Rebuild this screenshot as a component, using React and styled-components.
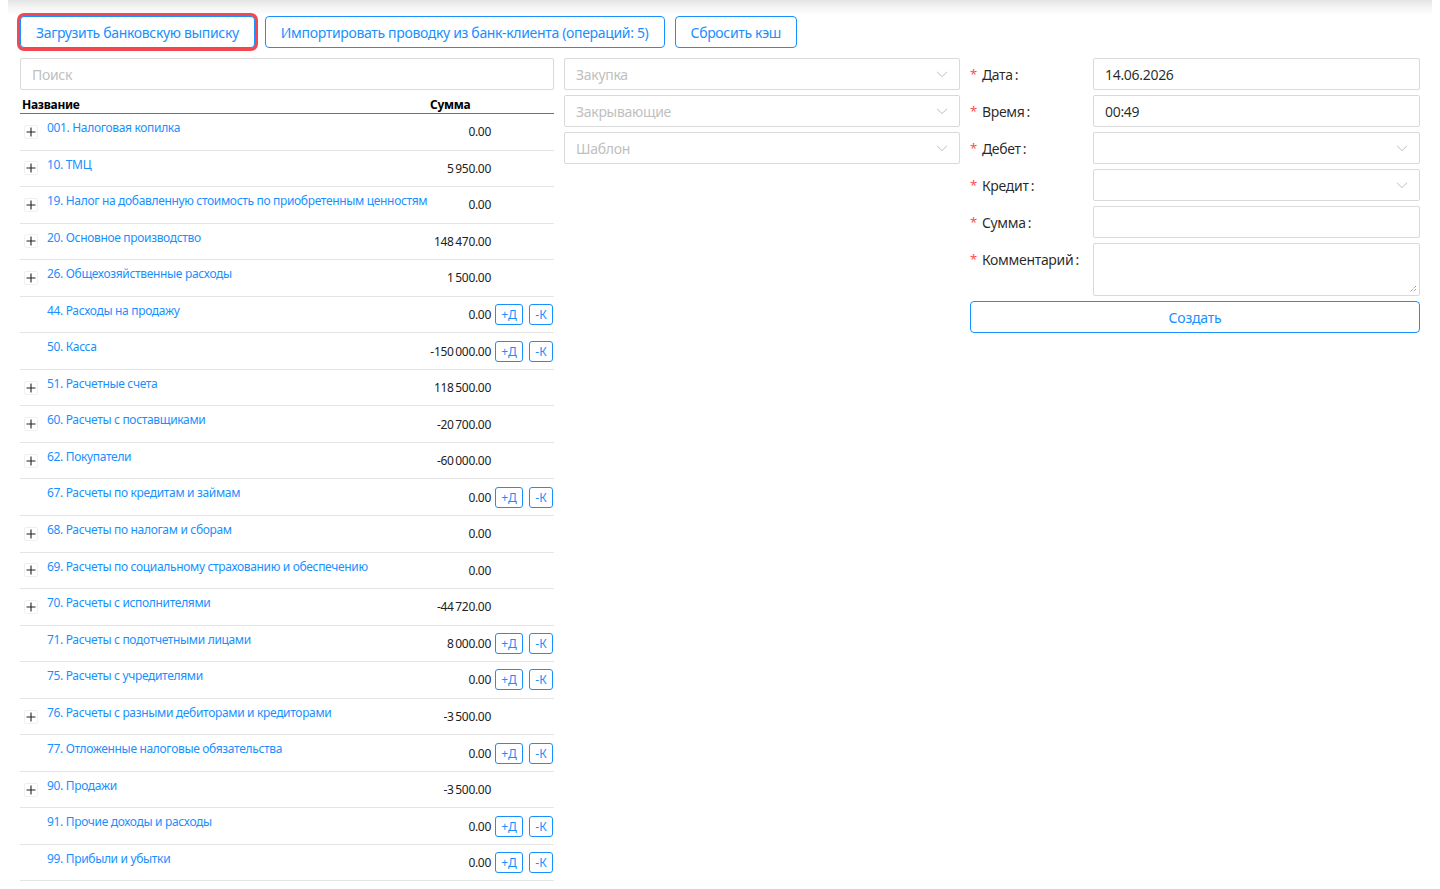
import React from 'react';
import styled, { createGlobalStyle } from 'styled-components';

const blue = '#1890ff';
const border = '#d9d9d9';

const GlobalStyle = createGlobalStyle`
  html, body {
    margin: 0;
    padding: 0;
    background: #fff;
    font-family: "Noto Sans", "Open Sans", sans-serif;
    color: rgba(0, 0, 0, 0.85);
  }
  * { box-sizing: border-box; }
`;

const Page = styled.div`
  width: 1440px;
  min-height: 889px;
  padding-bottom: 20px;
`;

const Shade = styled.div`
  height: 16px;
  margin: 0 8px;
  background: linear-gradient(to bottom, #e4e4e4 0%, #f4f4f4 45%, #fff 100%);
`;

const Toolbar = styled.div`
  display: flex;
  gap: 10px;
  padding: 0 20px;
  height: 32px;
`;

const Button = styled.button`
  height: 32px;
  padding: 0 15px;
  border: 1px solid ${blue};
  border-radius: 4px;
  background: #fff;
  color: ${blue};
  font-family: inherit;
  font-size: 14px;
  letter-spacing: -0.33px;
  cursor: pointer;
  box-shadow: ${(p) => (p.$focused ? '0 0 0 3px #f5474f' : 'none')};
`;

const Columns = styled.div`
  display: grid;
  grid-template-columns: 534px 396px 450px;
  column-gap: 10px;
  padding: 10px 20px 0;
  align-items: start;
`;

const Stack = styled.div`
  display: flex;
  flex-direction: column;
  gap: 5px;
`;

const Input = styled.div`
  height: 32px;
  border: 1px solid ${border};
  border-radius: 2px;
  display: flex;
  align-items: center;
  justify-content: space-between;
  padding: 0 11px;
  font-size: 14px;
  letter-spacing: -0.3px;
  color: ${(p) => (p.$placeholder ? '#bfbfbf' : 'rgba(0,0,0,0.85)')};
  background: #fff;
`;

const TextArea = styled(Input)`
  height: 53px;
  position: relative;
`;

const Grip = styled.svg`
  position: absolute;
  right: 2px;
  bottom: 2px;
`;

const Chevron = () => (
  <svg width="12" height="12" viewBox="0 0 12 12" fill="none">
    <path d="M1 3.8 L6 8.6 L11 3.8" stroke="#bfbfbf" strokeWidth="1" />
  </svg>
);

const Select = ({ placeholder, value }) => (
  <Input $placeholder={!value}>
    <span>{value || placeholder}</span>
    <Chevron />
  </Input>
);

const TableHead = styled.div`
  display: grid;
  grid-template-columns: 408px 1fr;
  margin-top: 7px;
  padding: 0 2px;
  height: 17px;
  font-size: 12px;
  font-weight: 700;
  letter-spacing: -0.3px;
  line-height: 16px;
  color: #000;
  border-bottom: 1px solid #707070;
`;

const Row = styled.div`
  display: grid;
  grid-template-columns: 27px minmax(0, 1fr) 72px 62px;
  height: 36.55px;
  border-bottom: 1px solid #e4e4e4;
  font-size: 12px;
`;

const ExpandCell = styled.div`
  display: flex;
  align-items: center;
  padding-left: 4px;
`;

const Expand = styled.span`
  width: 14px;
  height: 14px;
  border: 1px solid #f0f0f0;
  border-radius: 2px;
  display: flex;
  align-items: center;
  justify-content: center;
  background: #fff;
`;

const Name = styled.a`
  color: ${blue};
  padding-top: 6px;
  line-height: 16px;
  letter-spacing: -0.33px;
  text-decoration: none;
  white-space: nowrap;
`;

const Sum = styled.div`
  display: flex;
  align-items: center;
  justify-content: flex-end;
  padding-right: 1px;
  color: #222;
  letter-spacing: -0.3px;
  white-space: nowrap;
`;

const Actions = styled.div`
  display: flex;
  align-items: center;
  gap: 6px;
  padding-left: 3px;
`;

const Mini = styled.button`
  height: 21px;
  width: ${(p) => p.$w}px;
  padding: 0;
  border: 1px solid ${blue};
  border-radius: 3px;
  background: #fff;
  color: ${blue};
  font-family: inherit;
  font-size: 12px;
`;

const FormRow = styled.div`
  display: grid;
  grid-template-columns: 123px 1fr;
  align-items: start;
`;

const Label = styled.label`
  height: 32px;
  display: flex;
  align-items: center;
  font-size: 14px;
  letter-spacing: -0.3px;
  color: rgba(0, 0, 0, 0.85);
  &::before {
    content: '*';
    color: #ff4d4f;
    margin-right: 5px;
    font-size: 13px;
  }
  &::after {
    content: ':';
    margin-left: 2px;
  }
`;

const Submit = styled(Button)`
  width: 100%;
  letter-spacing: -0.2px;
`;

const rows = [
  ['001. Налоговая копилка', '0.00', true, false],
  ['10. ТМЦ', '5\u2009950.00', true, false],
  ['19. Налог на добавленную стоимость по приобретенным ценностям', '0.00', true, false],
  ['20. Основное производство', '148\u2009470.00', true, false],
  ['26. Общехозяйственные расходы', '1\u2009500.00', true, false],
  ['44. Расходы на продажу', '0.00', false, true],
  ['50. Касса', '-150\u2009000.00', false, true],
  ['51. Расчетные счета', '118\u2009500.00', true, false],
  ['60. Расчеты с поставщиками', '-20\u2009700.00', true, false],
  ['62. Покупатели', '-60\u2009000.00', true, false],
  ['67. Расчеты по кредитам и займам', '0.00', false, true],
  ['68. Расчеты по налогам и сборам', '0.00', true, false],
  ['69. Расчеты по социальному страхованию и обеспечению', '0.00', true, false],
  ['70. Расчеты с исполнителями', '-44\u2009720.00', true, false],
  ['71. Расчеты с подотчетными лицами', '8\u2009000.00', false, true],
  ['75. Расчеты с учредителями', '0.00', false, true],
  ['76. Расчеты с разными дебиторами и кредиторами', '-3\u2009500.00', true, false],
  ['77. Отложенные налоговые обязательства', '0.00', false, true],
  ['90. Продажи', '-3\u2009500.00', true, false],
  ['91. Прочие доходы и расходы', '0.00', false, true],
  ['99. Прибыли и убытки', '0.00', false, true],
];

const fields = [
  ['Дата', '14.06.2026', 'input'],
  ['Время', '00:49', 'input'],
  ['Дебет', '', 'select'],
  ['Кредит', '', 'select'],
  ['Сумма', '', 'input'],
];

const Plus = () => (
  <svg width="10" height="10" viewBox="0 0 10 10">
    <path d="M5 0.5 V9.5 M0.5 5 H9.5" stroke="#222" strokeWidth="1.1" />
  </svg>
);

const App = () => (
  <Page>
    <GlobalStyle />
    <Shade />
    <Toolbar>
      <Button $focused>Загрузить банковскую выписку</Button>
      <Button>Импортировать проводку из банк-клиента (операций: 5)</Button>
      <Button>Сбросить кэш</Button>
    </Toolbar>
    <Columns>
      <div>
        <Input $placeholder>Поиск</Input>
        <TableHead>
          <span>Название</span>
          <span>Сумма</span>
        </TableHead>
        {rows.map(([name, sum, expandable, actions]) => (
          <Row key={name}>
            <ExpandCell>
              {expandable && (
                <Expand>
                  <Plus />
                </Expand>
              )}
            </ExpandCell>
            <Name href="#">{name}</Name>
            <Sum>{sum}</Sum>
            <Actions>
              {actions && (
                <>
                  <Mini $w={28}>+Д</Mini>
                  <Mini $w={24}>-К</Mini>
                </>
              )}
            </Actions>
          </Row>
        ))}
      </div>
      <Stack>
        <Select placeholder="Закупка" />
        <Select placeholder="Закрывающие" />
        <Select placeholder="Шаблон" />
      </Stack>
      <Stack>
        {fields.map(([label, value, kind]) => (
          <FormRow key={label}>
            <Label>{label}</Label>
            {kind === 'select' ? <Select /> : <Input>{value}</Input>}
          </FormRow>
        ))}
        <FormRow>
          <Label>Комментарий</Label>
          <TextArea>
            <Grip width="8" height="8" viewBox="0 0 8 8">
              <path d="M7 1 L1 7 M7 4 L4 7" stroke="#777" strokeWidth="1" strokeDasharray="1 1" />
            </Grip>
          </TextArea>
        </FormRow>
        <Submit>Создать</Submit>
      </Stack>
    </Columns>
  </Page>
);

export default App;
